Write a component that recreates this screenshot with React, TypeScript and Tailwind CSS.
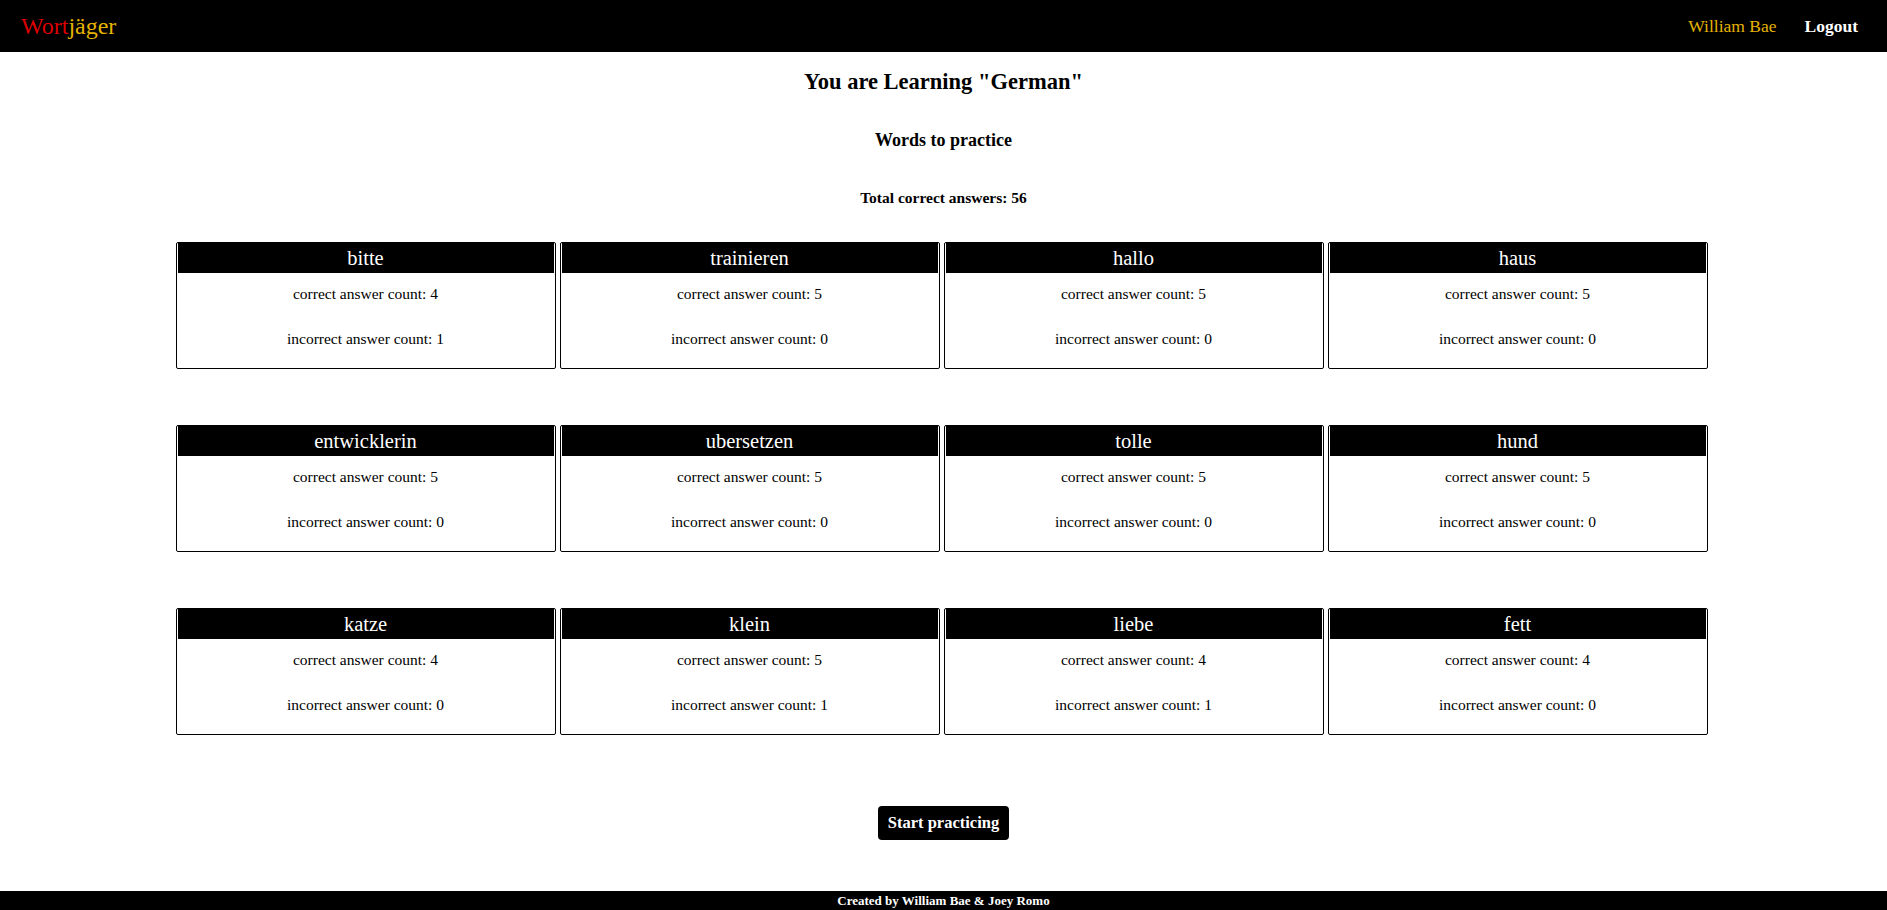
const words = [
  { word: "bitte", correct: 4, incorrect: 1 },
  { word: "trainieren", correct: 5, incorrect: 0 },
  { word: "hallo", correct: 5, incorrect: 0 },
  { word: "haus", correct: 5, incorrect: 0 },
  { word: "entwicklerin", correct: 5, incorrect: 0 },
  { word: "ubersetzen", correct: 5, incorrect: 0 },
  { word: "tolle", correct: 5, incorrect: 0 },
  { word: "hund", correct: 5, incorrect: 0 },
  { word: "katze", correct: 4, incorrect: 0 },
  { word: "klein", correct: 5, incorrect: 1 },
  { word: "liebe", correct: 4, incorrect: 1 },
  { word: "fett", correct: 4, incorrect: 0 },
];

function Navbar() {
  return (
    <nav className="h-[52px] bg-black flex items-center justify-between pl-[21px] pr-[29px]">
      <div className="text-[24px] leading-none">
        <span className="text-[#dd0000]">Wort</span>
        <span className="text-[#e6b400]">jäger</span>
      </div>
      <div className="flex items-center gap-[28px] text-[17.5px]">
        <span className="text-[#e6b400]">William Bae</span>
        <span className="text-white font-semibold">Logout</span>
      </div>
    </nav>
  );
}

function WordCard({ word, correct, incorrect }: { word: string; correct: number; incorrect: number }) {
  return (
    <div className="h-[127px] border border-black rounded-[2px] flex flex-col">
      <div className="h-[30px] bg-black text-white text-[20.5px] flex items-center justify-center mx-[1px]">
        {word}
      </div>
      <div className="flex flex-col items-center text-[15.5px] leading-[18px] pt-[12px] gap-[27px]">
        <p>correct answer count: {correct}</p>
        <p>incorrect answer count: {incorrect}</p>
      </div>
    </div>
  );
}

export default function App() {
  return (
    <div className="min-h-screen flex flex-col bg-white text-black font-['Liberation_Serif',serif]">
      <Navbar />
      <main className="flex-1 flex flex-col items-center">
        <h1 className="mt-[15px] text-[22.5px] leading-[30px] font-semibold">You are Learning "German"</h1>
        <h2 className="mt-[31px] text-[18px] leading-[24px] font-semibold">Words to practice</h2>
        <h3 className="mt-[37px] text-[15.5px] leading-[18px] font-bold">Total correct answers: 56</h3>
        <div className="mt-[35px] mr-[4px] w-[1532px] grid grid-cols-4 gap-x-[4px] gap-y-[56px]">
          {words.map((w) => (
            <WordCard key={w.word} {...w} />
          ))}
        </div>
        <button className="mt-[71px] h-[34px] px-[10px] bg-black text-white text-[16.5px] font-bold rounded-[4px]">
          Start practicing
        </button>
      </main>
      <footer className="h-[19px] bg-black text-white text-[13px] font-bold flex items-center justify-center">
        Created by William Bae &amp; Joey Romo
      </footer>
    </div>
  );
}
